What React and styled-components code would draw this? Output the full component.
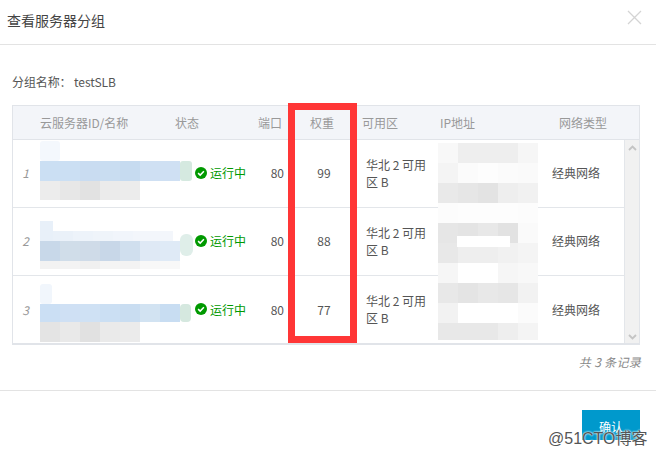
import React from "react";
import styled, { createGlobalStyle } from "styled-components";

const FONT = `"Noto Sans CJK SC", "Noto Sans", sans-serif`;

const Global = createGlobalStyle`
  html, body { margin: 0; padding: 0; background: #fff; }
  body { font-family: ${FONT}; font-size: 12px; color: #555; }
`;
const Dialog = styled.div`
  position: relative; width: 656px; height: 458px; overflow: hidden; background: #fff;
  display: flex; flex-direction: column;
`;
const Header = styled.header`
  height: 44px; border-bottom: 1px solid #e3e3e3; display: flex; align-items: center;
  justify-content: space-between; padding: 0 14px 0 7px; flex: none;
`;
const Title = styled.h2`margin: 0 0 5px; font-size: 14px; font-weight: 400; color: #444; line-height: 20px;`;
const Close = styled.svg`width: 15px; height: 15px; display: block; margin-bottom: 9px;`;
const Body = styled.main`padding: 0 16px 0 12px; flex: none;`;
const GroupName = styled.div`height: 60px; display: flex; align-items: center; font-size: 12px; color: #555; padding-top: 12px; box-sizing: border-box; letter-spacing: -0.1px;`;
const Table = styled.div`
  position: relative; border: 1px solid #e1e4e9; border-bottom-width: 2px; width: 628px; height: 240px; box-sizing: border-box; overflow: hidden;
`;
const HeadRow = styled.div`
  display: flex; height: 33px; align-items: center; background: #f3f5f9; border-bottom: 1px solid #e1e4e9;
  color: #999; font-size: 12px;
`;
const HeadCell = styled.div`width: ${p => p.$w}px; flex: none; padding-left: ${p => p.$pad || 0}px; box-sizing: border-box; padding-bottom: 1px;`;
const Content = styled.div`display: flex; height: 203px;`;
const Rows = styled.div`width: 611px; flex: none;`;
const Row = styled.div`
  display: flex; height: 68px; align-items: center; box-sizing: border-box;
  border-bottom: ${p => (p.$last ? "none" : "1px solid #e3e6ea")};
`;
const Cell = styled.div`flex: none; padding-bottom: 2px;`;
const Index = styled(Cell)`width: 27px; font-style: italic; color: #999; font-size: 12px; text-align: center; padding-right: 2px; box-sizing: border-box;`;
const NameCell = styled.div`width: 155px; height: 67px; flex: none;`;
const Mosaic = styled.svg`display: block;`;
const Status = styled(Cell)`width: 56px; display: flex; align-items: center; gap: 3px; color: #090; font-size: 12px;`;
const Port = styled(Cell)`width: 33px; text-align: right; color: #555;`;
const Weight = styled(Cell)`width: 80px; text-align: center; color: #555;`;
const Zone = styled(Cell)`width: 74px; line-height: 17px; color: #555; padding-left: 2px; box-sizing: border-box;`;
const Spacer = styled.div`width: 114px; flex: none;`;
const Net = styled(Cell)`flex: 1; color: #555;`;
const Scrollbar = styled.div`
  width: 16px; flex: none; background: #f1f1f1; border-left: 1px solid #e3e6ea; box-sizing: border-box;
  display: flex; flex-direction: column; justify-content: space-between; align-items: center; padding: 5px 0 3px;
`;
const Arrow = styled.svg`width: 9px; height: 6px; display: block;`;
const IpMosaic = styled.svg`position: absolute; left: 425px; top: 34px;`;
const Highlight = styled.div`
  position: absolute; left: 288px; top: 103px; width: 69px; height: 240px;
  border: 7px solid #ff3636; box-sizing: border-box;
`;
const Total = styled.div`text-align: right; font-style: italic; color: #888; font-size: 12px; line-height: 16px; margin-top: 9px; padding-bottom: 20px; letter-spacing: 0.3px; margin-right: -1px;`;
const Divider = styled.hr`border: 0; border-top: 1px solid #e3e3e3; margin: 0; flex: none;`;
const Footer = styled.footer`display: flex; justify-content: flex-end; padding: 19px 16px 0 0;`;
const Confirm = styled.button`
  width: 58px; height: 30px; border: 0; background: #0099cc; color: #fff; font: 12px ${FONT}; padding: 3px 0 0;
`;
const Watermark = styled.div`
  position: absolute; left: 548px; top: 429px; font-size: 16px; line-height: 20px; color: #555; white-space: nowrap;
  font-family: "Liberation Sans", "Noto Sans CJK SC", sans-serif;
  text-shadow: 0 0 2px #fff, 0 0 2px #fff;
`;

const Blocks = ({ data }) =>
  data.map(([x, y, w, h, fill, rx], i) => <rect key={i} x={x} y={y} width={w} height={h} fill={fill} rx={rx || 0} />);

const row = (y, h, xs, fills) => fills.map((f, i) => [xs + i * 20, y, 20, h, f]);

const name1 = [
  [0, 1, 20, 20, "#f4f8fd", 3],
  ...row(21, 20, 0, ["#cbdff3", "#cbdff3", "#c9dcf1", "#c9ddf1", "#c6dbf0", "#cfe0f3", "#cfe0f3"]),
  [140, 21, 12, 20, "#d5e9e0", 3],
  ...row(41, 19, 0, ["#ececec", "#e7e7e7", "#e2e2e2", "#ebebeb", "#ececec"]),
];
const name2 = [
  [0, 13, 13, 22, "#e8f0f9"],
  ...row(23, 10, 13, ["#eaf1f9", "#edf3fa", "#eff4fa", "#f1f5fb", "#f3f6fb", "#f3f6fb"]),
  ...row(33, 20, 0, ["#c8d8e9", "#d0dde9", "#cfdbe8", "#c8d7e8", "#d0dfee", "#dfe9f5", "#dfeaf6"]),
  [140, 26, 13, 22, "#dfeee9", 6],
  ...row(53, 8, 0, ["#f2f2f2", "#f3f3f3", "#f0f0f0", "#f4f4f4", "#f3f3f3", "#f8f8f8", "#f8f8f8"]),
];
const name3 = [
  [0, 7, 12, 20, "#f1f6fc", 3],
  ...row(27, 18, 0, ["#cbdff4", "#cfe0f4", "#cfe1f4", "#cbdff3", "#c9ddf1", "#d2e3f2", "#c8ddf2"]),
  [140, 27, 11, 18, "#d5e8df", 4],
  ...row(45, 20, 0, ["#e4e4e4", "#e9e9e9", "#e1e1e1", "#eaeaea", "#ebebeb"]),
];

const ip = [
  ...row(3, 20, 0, ["#f8f8f8", "#eeeeee", "#eeeeee", "#eeeeee", "#f6f6f6"]),
  ...row(23, 20, 0, ["#f4f4f4", "#fbfbfb", "#fdfdfd", "#fbfbfb", "#fafafa"]),
  ...row(43, 20, 0, ["#e9e9e9", "#e6e6e6", "#e3e3e3", "#eeeeee", "#f1f1f1"]),
  ...row(63, 20, 0, ["#fcfcfc", "#fdfdfd", "#fdfdfd", "#fdfdfd", "#fcfcfc"]),
  ...row(83, 20, 0, ["#e6e6e6", "#e4e4e4", "#e8e8e8", "#e2e2e2", "#fafafa"]),
  ...row(103, 20, 0, ["#e8e8e8", "#eeeeee", "#eeeeee", "#f1f1f1", "#f4f4f4"]),
  [19, 96, 53, 11, "#ffffff"],
  ...row(123, 20, 0, ["#f6f6f6", "#ffffff", "#ffffff", "#f6f6f6", "#f8f8f8"]),
  ...row(143, 20, 0, ["#e8e8e8", "#e4e4e4", "#e8e8e8", "#e6e6e6", "#f2f2f2"]),
  ...row(163, 20, 0, ["#f2f2f2", "#ffffff", "#ffffff", "#ffffff", "#fbfbfb"]),
  ...row(183, 17, 0, ["#e8e8e8", "#e8e8e8", "#e8e8e8", "#eeeeee", "#f4f4f4"]),
];

const rows = [
  { n: 1, w: 99, m: name1 },
  { n: 2, w: 88, m: name2 },
  { n: 3, w: 77, m: name3 },
];

const Check = () => (
  <svg width="12" height="12" viewBox="0 0 12 12">
    <circle cx="6" cy="6" r="6" fill="#090" />
    <path d="M3.1 6.1 5.2 8.1 8.9 4.3" fill="none" stroke="#fff" strokeWidth="1.5" />
  </svg>
);

export default function App() {
  return (
    <Dialog>
      <Global />
      <Header>
        <Title>查看服务器分组</Title>
        <Close viewBox="0 0 15 15">
          <path d="M1 1 14 14M14 1 1 14" stroke="#d4d4d4" strokeWidth="1.3" fill="none" />
        </Close>
      </Header>
      <Body>
        <GroupName>分组名称： testSLB</GroupName>
        <Table>
          <HeadRow>
            <HeadCell $w={27} />
            <HeadCell $w={135}>云服务器ID/名称</HeadCell>
            <HeadCell $w={83}>状态</HeadCell>
            <HeadCell $w={52}>端口</HeadCell>
            <HeadCell $w={52}>权重</HeadCell>
            <HeadCell $w={78}>可用区</HeadCell>
            <HeadCell $w={119}>IP地址</HeadCell>
            <HeadCell $w={70}>网络类型</HeadCell>
          </HeadRow>
          <Content>
            <Rows>
              {rows.map((r, i) => (
                <Row key={r.n} $last={i === 2}>
                  <Index>{r.n}</Index>
                  <NameCell>
                    <Mosaic width="155" height="67" viewBox="0 0 155 67">
                      <Blocks data={r.m} />
                    </Mosaic>
                  </NameCell>
                  <Status><Check />运行中</Status>
                  <Port>80</Port>
                  <Weight>{r.w}</Weight>
                  <Zone>华北 2 可用<br />区 B</Zone>
                  <Spacer />
                  <Net>经典网络</Net>
                </Row>
              ))}
            </Rows>
            <Scrollbar>
              <Arrow viewBox="0 0 9 6"><path d="M1 5 4.5 1.5 8 5" fill="none" stroke="#c4c4c4" strokeWidth="1.8" /></Arrow>
              <Arrow viewBox="0 0 9 6"><path d="M1 1 4.5 4.5 8 1" fill="none" stroke="#c4c4c4" strokeWidth="1.8" /></Arrow>
            </Scrollbar>
          </Content>
          <IpMosaic width="100" height="200" viewBox="0 0 100 200">
            <Blocks data={ip} />
          </IpMosaic>
        </Table>
        <Total>共 3 条记录</Total>
      </Body>
      <Divider />
      <Footer><Confirm>确认</Confirm></Footer>
      <Highlight />
      <Watermark>@51CTO博客</Watermark>
    </Dialog>
  );
}
